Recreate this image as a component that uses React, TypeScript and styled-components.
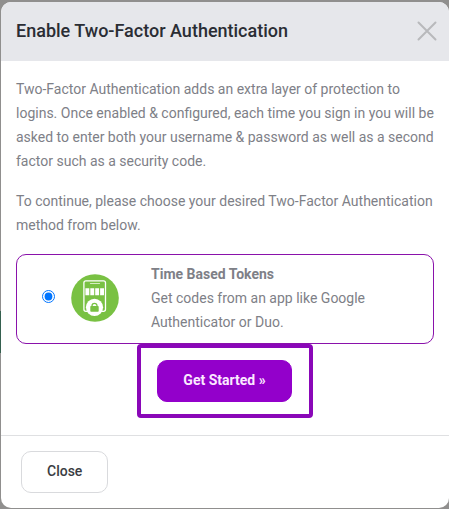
import React, { useState } from "react";
import styled, { createGlobalStyle } from "styled-components";

const GlobalStyle = createGlobalStyle`
  *, *::before, *::after {
    box-sizing: border-box;
  }
  body {
    margin: 0;
    background: #908f8e;
    color: #7e8087;
    font-family: Roboto, "Liberation Sans", sans-serif;
    font-size: 14px;
    line-height: 24px;
  }
`;

const Backdrop = styled.div`
  min-height: 100vh;
  display: flex;
  flex-direction: column;
  padding: 2px 0 1px 1px;
  background: linear-gradient(#35604f, #35604f) 0 311px / 1px 42px no-repeat, #908f8e;
`;

const Dialog = styled.section`
  flex: 1;
  display: flex;
  flex-direction: column;
  overflow: hidden;
  border-radius: 10px;
  background: #fff;
`;

const Header = styled.header`
  display: flex;
  align-items: center;
  justify-content: space-between;
  padding: 17px 12px 18px 15px;
  background: #e6e7eb;
`;

const Title = styled.h1`
  margin: 0;
  color: #2a2d34;
  font-size: 18px;
  font-weight: 500;
  line-height: 24px;
`;

const IconButton = styled.button`
  display: flex;
  padding: 0;
  border: 0;
  background: none;
  color: #b8b9bc;
  cursor: pointer;
`;

const Body = styled.div`
  flex: 1;
  display: flex;
  flex-direction: column;
  padding: 16px 15px 17px;
`;

const Paragraph = styled.p`
  margin: 0 0 16px;
`;

const Method = styled.label`
  display: flex;
  align-items: center;
  margin-top: 1px;
  padding: 7px 24px 9px;
  border: 1px solid #8a12ab;
  border-radius: 10px;
  cursor: pointer;
`;

const Radio = styled.input`
  flex: none;
  width: 13px;
  height: 13px;
  margin: 0 16px 4px 1px;
  accent-color: #0075ff;
`;

const MethodIcon = styled.svg`
  flex: none;
  width: 48px;
  height: 48px;
  margin-right: 32px;
`;

const MethodText = styled.span`
  display: flex;
  flex-direction: column;
`;

const MethodName = styled.strong`
  font-weight: 700;
`;

const Highlight = styled.div`
  align-self: center;
  padding: 12px 17px 12px 16px;
  border: 4px solid #8a07b8;
  border-radius: 4px;
`;

const Button = styled.button`
  height: 42px;
  padding: 0 25px 2px;
  border: 1px solid #d9dadd;
  border-radius: 10px;
  background: #fff;
  color: #3a3c42;
  font-family: inherit;
  font-size: 14px;
  font-weight: 500;
  line-height: 24px;
  cursor: pointer;
`;

const PrimaryButton = styled(Button)`
  border-color: #9300cb;
  background: #9300cb;
  color: #fbe9ff;
  font-weight: 700;
`;

const Footer = styled.footer`
  padding: 15px 20px;
  border-top: 1px solid #dfe0e2;
`;

function TokenIcon() {
  return (
    <MethodIcon viewBox="0 0 48 48" aria-hidden="true">
      <circle cx="24" cy="24" r="23.8" fill="#79c143" />
      <rect x="12.9" y="6.8" width="21.6" height="30.5" rx="2" fill="none" stroke="#fff" strokeWidth="1.3" />
      <path d="M19.5 9.5h9" stroke="#d5edc2" strokeWidth="1.2" strokeLinecap="round" />
      <path d="M14.4 14.2h3.9v7h-3.9zM19.3 14.2h3.9v7h-3.9zM24.2 14.2h3.9v7h-3.9zM29.1 14.2h3.9v7h-3.9z" fill="#fff" />
      <circle cx="23.5" cy="33.3" r="8.6" fill="#fff" />
      <path d="M21 33v-1.2a2.5 2.5 0 0 1 5 0V33" fill="none" stroke="#79c143" strokeWidth="1.3" />
      <rect x="19.3" y="32" width="8.4" height="5.8" rx="0.8" fill="#79c143" />
    </MethodIcon>
  );
}

export default function App() {
  const [method, setMethod] = useState("totp");

  return (
    <>
      <GlobalStyle />
      <Backdrop>
        <Dialog role="dialog" aria-labelledby="dialog-title">
          <Header>
            <Title id="dialog-title">Enable Two-Factor Authentication</Title>
            <IconButton type="button" aria-label="Dismiss">
              <svg width="20" height="20" viewBox="0 0 20 20" aria-hidden="true">
                <path d="M1.5 1.5l17 17M18.5 1.5l-17 17" stroke="currentColor" strokeWidth="2" strokeLinecap="round" />
              </svg>
            </IconButton>
          </Header>
          <Body>
            <Paragraph>
              Two-Factor Authentication adds an extra layer of protection to logins. Once enabled &amp; configured,
              each time you sign in you will be asked to enter both your username &amp; password as well as a second
              factor such as a security code.
            </Paragraph>
            <Paragraph>
              To continue, please choose your desired Two-Factor Authentication method from below.
            </Paragraph>
            <Method>
              <Radio
                type="radio"
                name="method"
                value="totp"
                checked={method === "totp"}
                onChange={(event) => setMethod(event.target.value)}
              />
              <TokenIcon />
              <MethodText>
                <MethodName>Time Based Tokens</MethodName>
                <span>Get codes from an app like Google Authenticator or Duo.</span>
              </MethodText>
            </Method>
            <Highlight>
              <PrimaryButton type="button">Get Started »</PrimaryButton>
            </Highlight>
          </Body>
          <Footer>
            <Button type="button">Close</Button>
          </Footer>
        </Dialog>
      </Backdrop>
    </>
  );
}
